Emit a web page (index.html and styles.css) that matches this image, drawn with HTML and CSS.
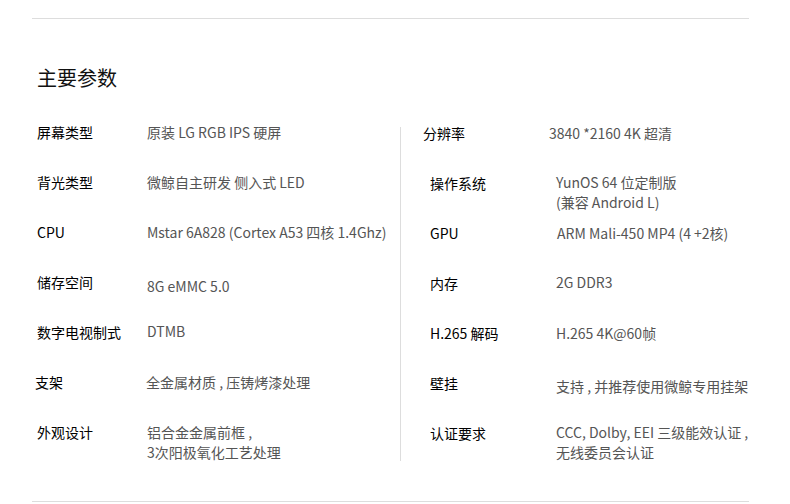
FILE: index.html
```html
<!DOCTYPE html>
<html lang="zh-CN">
<head>
<meta charset="utf-8">
<title>主要参数</title>
<link rel="stylesheet" href="styles.css">
</head>
<body>
<div class="page">
  <hr class="rule">
  <h2 class="title">主要参数</h2>
  <div class="specs">
    <div class="col col-left">
      <div class="row"><div class="label">屏幕类型</div><div class="value">原装 LG RGB IPS 硬屏</div></div>
      <div class="row"><div class="label">背光类型</div><div class="value">微鲸自主研发 侧入式 LED</div></div>
      <div class="row"><div class="label">CPU</div><div class="value">Mstar 6A828 (Cortex A53 四核 1.4Ghz)</div></div>
      <div class="row"><div class="label">储存空间</div><div class="value down4">8G eMMC 5.0</div></div>
      <div class="row"><div class="label">数字电视制式</div><div class="value up1">DTMB</div></div>
      <div class="row"><div class="label left2">支架</div><div class="value left1">全金属材质 , 压铸烤漆处理</div></div>
      <div class="row"><div class="label">外观设计</div><div class="value">铝合金金属前框 ,<br>3次阳极氧化工艺处理</div></div>
    </div>
    <div class="divider"></div>
    <div class="col col-right">
      <div class="row row-shift"><div class="label">分辨率</div><div class="value">3840 *2160 4K 超清</div></div>
      <div class="row"><div class="label">操作系统</div><div class="value up1">YunOS 64 位定制版<br>(兼容 Android L)</div></div>
      <div class="row"><div class="label">GPU</div><div class="value right1">ARM Mali-450 MP4 (4 +2核)</div></div>
      <div class="row"><div class="label">内存</div><div class="value up1">2G DDR3</div></div>
      <div class="row"><div class="label">H.265 解码</div><div class="value">H.265 4K@60帧</div></div>
      <div class="row"><div class="label">壁挂</div><div class="value down3">支持 , 并推荐使用微鲸专用挂架</div></div>
      <div class="row"><div class="label">认证要求</div><div class="value up1">CCC, Dolby, EEI 三级能效认证 ,<br>无线委员会认证</div></div>
    </div>
  </div>
  <hr class="rule rule-bottom">
</div>
</body>
</html>
```

FILE: styles.css
```css
html, body {
  margin: 0;
  padding: 0;
  background: #ffffff;
}

body {
  font-family: "Noto Sans CJK SC", "Noto Sans", sans-serif;
  color: #333;
}

.page {
  width: 717px;
  margin-left: 32px;
  padding-top: 18px;
}

.rule {
  margin: 0;
  border: 0;
  height: 1px;
  background: #dddddd;
}

.title {
  margin: 45px 0 0 5px;
  font-size: 20px;
  line-height: 28px;
  font-weight: 400;
  color: #111;
}

.specs {
  display: grid;
  grid-template-columns: 368px 1px 1fr;
  margin-top: 30px;
  font-size: 14px;
  line-height: 20px;
}

.col-left {
  padding-left: 5px;
}

.col-right {
  padding-left: 29px;
  padding-top: 1px;
}

.divider {
  background: #dddddd;
  margin-top: 5px;
  margin-bottom: 12px;
}

.row {
  display: flex;
  height: 50px;
}

.row-shift {
  margin-left: -7px;
}

.label {
  width: 110px;
  flex-shrink: 0;
  color: #000;
  font-weight: 400;
}

.col-right .label {
  width: 126px;
}

.value {
  color: #555;
  white-space: nowrap;
}

.down4 { margin-top: 4px; }
.down3 { margin-top: 3px; }
.up1 { margin-top: -1px; }
.left2 { margin-left: -2px; margin-right: 2px; }
.left1 { margin-left: -1px; }
.right1 { margin-left: 1px; }

.rule-bottom {
  margin-top: 28px;
}
```
